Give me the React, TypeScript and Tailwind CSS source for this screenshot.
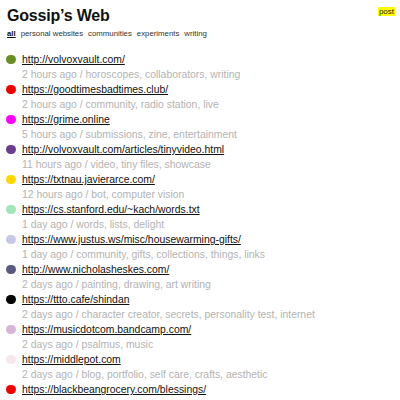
import React from "react";

const items = [
  { c: "bg-[#6b8e23]", url: "http://volvoxvault.com/", meta: "2 hours ago / horoscopes, collaborators, writing" },
  { c: "bg-[#ee0000]", url: "https://goodtimesbadtimes.club/", meta: "2 hours ago / community, radio station, live" },
  { c: "bg-[#ff00ff]", url: "https://grime.online", meta: "5 hours ago / submissions, zine, entertainment" },
  { c: "bg-[#6a3d8f]", url: "http://volvoxvault.com/articles/tinyvideo.html", meta: "11 hours ago / video, tiny files, showcase" },
  { c: "bg-[#ffd700]", url: "https://txtnau.javierarce.com/", meta: "12 hours ago / bot, computer vision" },
  { c: "bg-[#a3e4b8]", url: "https://cs.stanford.edu/~kach/words.txt", meta: "1 day ago / words, lists, delight" },
  { c: "bg-[#c8c8e6]", url: "https://www.justus.ws/misc/housewarming-gifts/", meta: "1 day ago / community, gifts, collections, things, links" },
  { c: "bg-[#5a5a80]", url: "http://www.nicholasheskes.com/", meta: "2 days ago / painting, drawing, art writing" },
  { c: "bg-[#000000]", url: "https://ttto.cafe/shindan", meta: "2 days ago / character creator, secrets, personality test, internet" },
  { c: "bg-[#d8b4d8]", url: "https://musicdotcom.bandcamp.com/", meta: "2 days ago / psalmus, music" },
  { c: "bg-[#f8e6ef]", url: "https://middlepot.com", meta: "2 days ago / blog, portfolio, self care, crafts, aesthetic" },
  { c: "bg-[#ee0000]", url: "https://blackbeangrocery.com/blessings/", meta: "2 days ago / blessings, community, gratitude" },
];

export default function App() {
  return (
    <div className="w-[400px] h-[400px] overflow-hidden bg-white text-[#111] [font-family:'Liberation_Sans',Arial,sans-serif]">
      <div className="flex justify-between pl-[7px] pr-[5px] pt-[6px]">
        <h1 className="text-[16px] leading-[20px] font-bold tracking-[-0.2px]">Gossip’s Web</h1>
        <span className="mt-[1px] h-[9px] bg-[#ffff00] px-[1px] text-[8px] leading-[9px] text-[#222]">post</span>
      </div>
      <nav className="mt-[2px] flex gap-[5px] pl-[7px] text-[7.8px] leading-[12px] text-[#333]">
        <span className="font-bold underline text-[#111]">all</span>
        <span>personal websites</span>
        <span>communities</span>
        <span>experiments</span>
        <span>writing</span>
      </nav>
      <ul className="mt-[12px] flex flex-col">
        {items.map((it, i) => (
          <li key={i} className="flex h-[30px] items-start pl-[6px]">
            <span className={`h-[9.5px] w-[9.5px] shrink-0 rounded-full ${it.c}`} style={{ marginTop: 2.75 }} />
            <div className="ml-[6.5px] flex flex-col text-[10.4px] leading-[15px] whitespace-nowrap">
              <a className="underline text-[#111]">{it.url}</a>
              <span className="text-[#b3b3b3]">{it.meta}</span>
            </div>
          </li>
        ))}
      </ul>
    </div>
  );
}
